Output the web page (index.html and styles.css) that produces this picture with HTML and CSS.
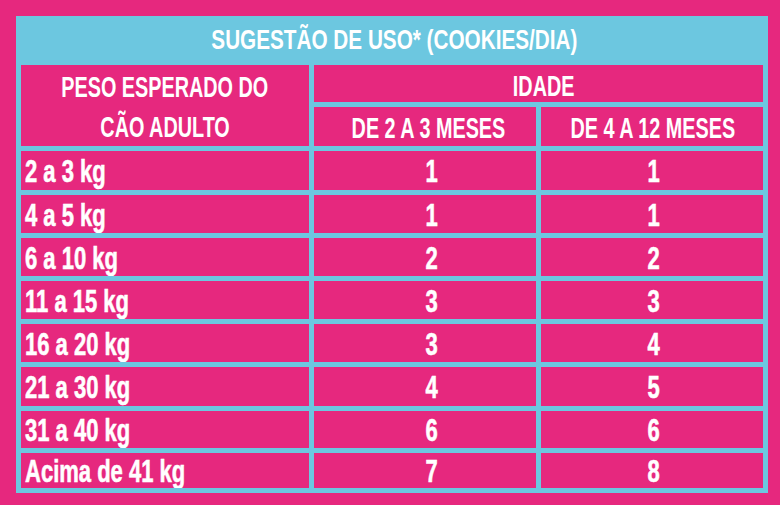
FILE: index.html
```html
<!DOCTYPE html>
<html lang="pt-BR">
<head>
<meta charset="utf-8">
<title>Sugestão de uso</title>
<link rel="stylesheet" href="styles.css">
</head>
<body>
<div class="page">
  <div class="table">
    <div class="title"><span class="sq t">SUGESTÃO DE USO* (COOKIES/DIA)</span></div>

    <div class="cell head weight"><span class="sq h">PESO ESPERADO DO</span><span class="sq h">CÃO ADULTO</span></div>
    <div class="cell head age"><span class="sq h">IDADE</span></div>
    <div class="cell head c2"><span class="sq h">DE 2 A 3 MESES</span></div>
    <div class="cell head c3"><span class="sq h">DE 4 A 12 MESES</span></div>

    <div class="cell label"><span class="sq d">2 a 3 kg</span></div>
    <div class="cell num c2"><span class="sq d">1</span></div>
    <div class="cell num c3"><span class="sq d">1</span></div>

    <div class="cell label"><span class="sq d">4 a 5 kg</span></div>
    <div class="cell num c2"><span class="sq d">1</span></div>
    <div class="cell num c3"><span class="sq d">1</span></div>

    <div class="cell label"><span class="sq d">6 a 10 kg</span></div>
    <div class="cell num c2"><span class="sq d">2</span></div>
    <div class="cell num c3"><span class="sq d">2</span></div>

    <div class="cell label"><span class="sq d">11 a 15 kg</span></div>
    <div class="cell num c2"><span class="sq d">3</span></div>
    <div class="cell num c3"><span class="sq d">3</span></div>

    <div class="cell label"><span class="sq d">16 a 20 kg</span></div>
    <div class="cell num c2"><span class="sq d">3</span></div>
    <div class="cell num c3"><span class="sq d">4</span></div>

    <div class="cell label"><span class="sq d">21 a 30 kg</span></div>
    <div class="cell num c2"><span class="sq d">4</span></div>
    <div class="cell num c3"><span class="sq d">5</span></div>

    <div class="cell label"><span class="sq d">31 a 40 kg</span></div>
    <div class="cell num c2"><span class="sq d">6</span></div>
    <div class="cell num c3"><span class="sq d">6</span></div>

    <div class="cell label"><span class="sq d">Acima de 41 kg</span></div>
    <div class="cell num c2"><span class="sq d">7</span></div>
    <div class="cell num c3"><span class="sq d">8</span></div>
  </div>
</div>
</body>
</html>
```
FILE: styles.css
```css
html, body {
  margin: 0;
  padding: 0;
  background: #e6287e;
}

.page {
  width: 780px;
  height: 505px;
  padding: 16px 0 0 16px;
  box-sizing: border-box;
  font-family: "Liberation Sans", Arial, sans-serif;
  color: #ffffff;
  overflow: hidden;
}

.table {
  width: 752px;
  box-sizing: border-box;
  background: #6cc7e0;
  padding: 0 5px 5px 5px;
  display: grid;
  grid-template-columns: 288px 222px 222px;
  grid-template-rows: 44px 37px 39px 39px 38px 38px 38px 38px 39px 37px 35px;
  gap: 5px;
}

.title {
  grid-column: 1 / 4;
  display: flex;
  align-items: center;
  justify-content: center;
  padding-top: 3px;
  padding-left: 4px;
}

.cell {
  background: #e6287e;
  display: flex;
  align-items: center;
  justify-content: center;
  overflow: hidden;
}

.weight {
  grid-row: 2 / 4;
  flex-direction: column;
  line-height: 40px;
  padding-top: 2px;
}

.age {
  grid-column: 2 / 4;
  padding-left: 10px;
  padding-top: 4px;
}

.head.c2 { padding-left: 6px; padding-top: 3px; }
.head.c3 { padding-left: 2px; padding-top: 3px; }

.label {
  justify-content: flex-start;
  padding-left: 4px;
  padding-top: 3px;
}

.num { padding-top: 3px; }
.num.c2 { padding-left: 14px; }
.num.c3 { padding-left: 3px; }

.sq {
  display: inline-block;
  white-space: nowrap;
}

.t {
  font-size: 28px;
  font-weight: 700;
  transform: scaleX(0.74);
}

.h {
  font-size: 30px;
  font-weight: 700;
  transform: scaleX(0.66);
}

.d {
  font-size: 31px;
  font-weight: 700;
  -webkit-text-stroke: 0.6px #ffffff;
  transform: scaleX(0.71);
  transform-origin: left center;
}

.num .d { transform-origin: center center; }
```
